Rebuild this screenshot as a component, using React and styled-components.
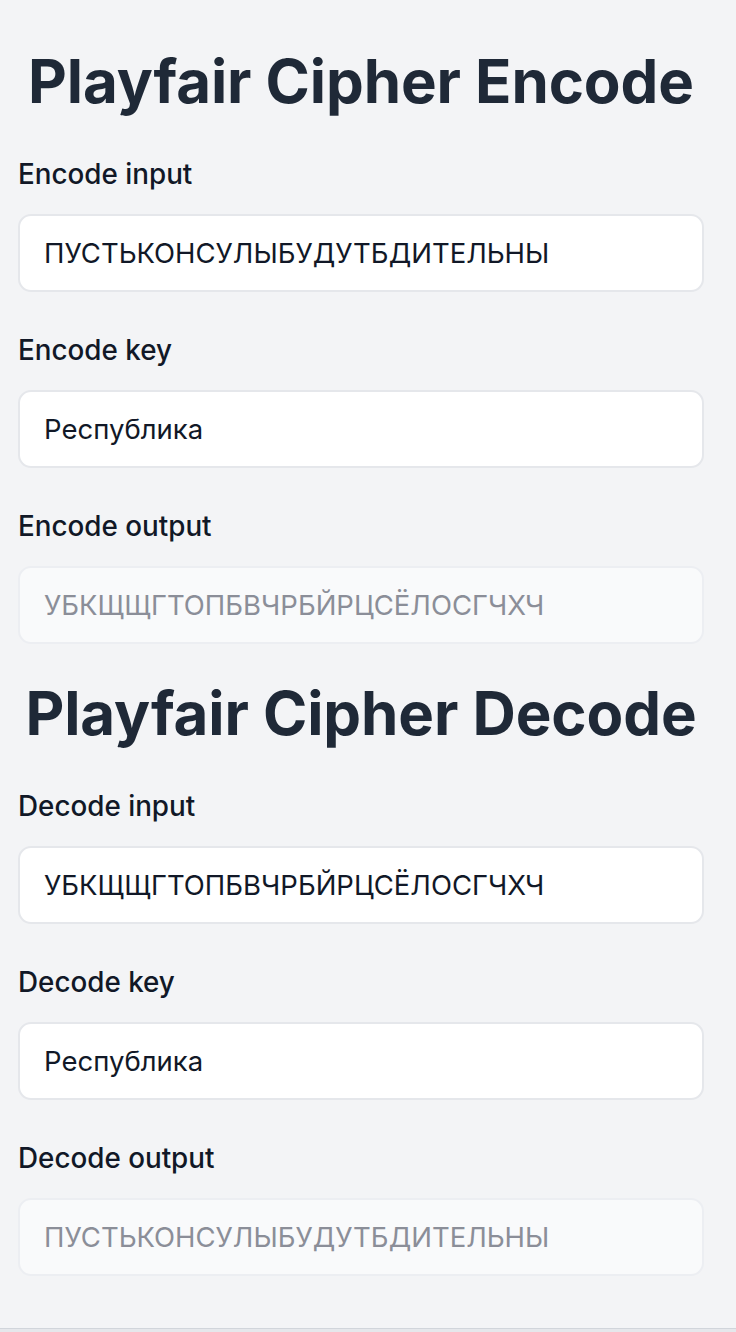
import React, { useState } from 'react';
import styled, { createGlobalStyle } from 'styled-components';

const GlobalStyle = createGlobalStyle`
  html, body {
    margin: 0;
    padding: 0;
    background: #e5e7eb;
  }
  body {
    font-family: Inter, 'Noto Sans', sans-serif;
  }
`;

const Page = styled.div`
  background: #f3f4f6;
  min-height: 1329px;
  box-sizing: border-box;
  border-bottom: 1px solid #d1d5db;
  padding: 46px 32px 0 18px;
`;

const Section = styled.section`
  display: flex;
  flex-direction: column;
  & + & {
    margin-top: 34px;
  }
`;

const Title = styled.h1`
  margin: 0 0 40px;
  font-size: 60px;
  line-height: 70px;
  font-weight: 700;
  color: #1f2937;
  text-align: center;
  letter-spacing: -0.1px;
`;

const Field = styled.div`
  display: flex;
  flex-direction: column;
  gap: 22px;
  & + & {
    margin-top: 40px;
  }
`;

const Label = styled.label`
  font-size: 27.8px;
  line-height: 36px;
  font-weight: 500;
  color: #111827;
`;

const TextInput = styled.input`
  box-sizing: border-box;
  width: 100%;
  height: 78px;
  padding: 0 24px;
  border: 2px solid ${p => (p.readOnly ? '#eceef2' : '#e5e7eb')};
  border-radius: 13px;
  background: ${p => (p.readOnly ? '#f9fafb' : '#ffffff')};
  color: ${p => (p.readOnly ? '#8b8e98' : '#111827')};
  font-family: Inter, 'Noto Sans', sans-serif;
  font-size: 27.5px;
  outline: none;
`;

const CipherBlock = ({ mode, input, keyword, output }) => {
  const [text, setText] = useState(input);
  const [key, setKey] = useState(keyword);

  return (
    <Section>
      <Title>Playfair Cipher {mode}</Title>
      <Field>
        <Label>{mode} input</Label>
        <TextInput value={text} onChange={e => setText(e.target.value)} />
      </Field>
      <Field>
        <Label>{mode} key</Label>
        <TextInput value={key} onChange={e => setKey(e.target.value)} />
      </Field>
      <Field>
        <Label>{mode} output</Label>
        <TextInput readOnly value={output} />
      </Field>
    </Section>
  );
};

const App = () => (
  <>
    <GlobalStyle />
    <Page>
      <CipherBlock
        mode="Encode"
        input="ПУСТЬКОНСУЛЫБУДУТБДИТЕЛЬНЫ"
        keyword="Республика"
        output="УБКЩЩГТОПБВЧРБЙРЦСЁЛОСГЧХЧ"
      />
      <CipherBlock
        mode="Decode"
        input="УБКЩЩГТОПБВЧРБЙРЦСЁЛОСГЧХЧ"
        keyword="Республика"
        output="ПУСТЬКОНСУЛЫБУДУТБДИТЕЛЬНЫ"
      />
    </Page>
  </>
);

export default App;
